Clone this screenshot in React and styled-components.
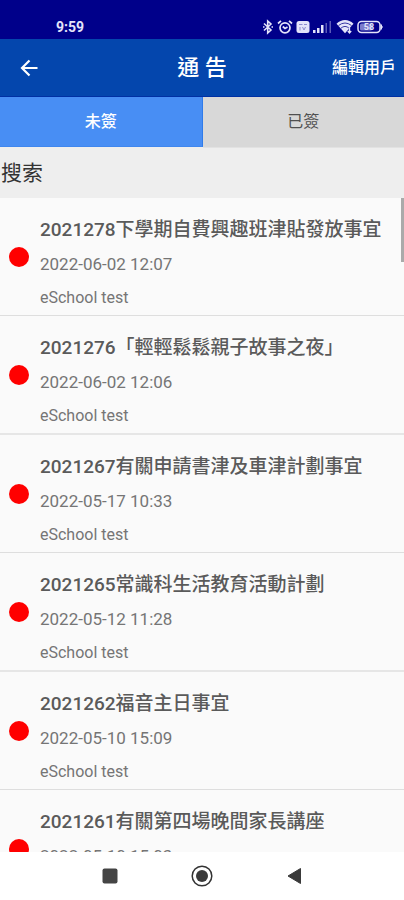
import React, { useState } from "react";
import styled, { createGlobalStyle } from "styled-components";

const GlobalStyle = createGlobalStyle`
  * {
    box-sizing: border-box;
  }

  body {
    margin: 0;
    font-family: Roboto, "Noto Sans CJK TC", sans-serif;
    background-color: #fafafa;
  }

  button,
  input {
    font-family: inherit;
  }
`;

const Screen = styled.div`
  display: flex;
  flex-direction: column;
  height: 100vh;
  overflow: hidden;
`;

// status bar
const StatusBar = styled.div`
  display: flex;
  justify-content: space-between;
  align-items: center;
  flex: none;
  height: 39px;
  padding: 14px 20px 0 56px;
  background-color: #00008a;
  color: #e4e4fa;
`;

const Clock = styled.span`
  font-size: 14px;
  line-height: 24px;
  font-weight: 700;
`;

const StatusIcons = styled.div`
  display: flex;
  align-items: center;
  gap: 3px;

  svg {
    display: block;
  }
`;

// header
const Header = styled.header`
  display: grid;
  grid-template-columns: 1fr auto 1fr;
  align-items: center;
  flex: none;
  height: 58px;
  padding: 0 8px;
  background-color: #0446ad;
  border-bottom: 1px solid #0030a4;
  color: white;
`;

const BackButton = styled.button`
  display: flex;
  justify-self: start;
  padding: 8px;
  border: none;
  background: none;
  color: white;
  cursor: pointer;
`;

const Title = styled.h1`
  margin: 0;
  font-size: 22px;
  line-height: 32px;
  font-weight: 500;
`;

const EditButton = styled.button`
  justify-self: end;
  padding: 0;
  border: none;
  background: none;
  color: white;
  font-size: 16px;
  line-height: 24px;
  font-weight: 500;
  cursor: pointer;
`;

// tabs
const Tabs = styled.div`
  display: flex;
  flex: none;
  height: 51px;
  background-color: #eeeeee;
`;

const Tab = styled.button`
  flex: 1;
  height: ${(props) => (props.$active ? "50px" : "51px")};
  padding: 0;
  border: none;
  border-right: ${(props) => (props.$active ? "1px solid #2f7bea" : "none")};
  border-bottom: 1px solid ${(props) => (props.$active ? "#3f86ee" : "#e2e2e2")};
  background-color: ${(props) => (props.$active ? "#488ef4" : "#d8d8d8")};
  color: ${(props) => (props.$active ? "white" : "#505050")};
  font-size: 16px;
  line-height: 24px;
  font-weight: ${(props) => (props.$active ? 500 : 400)};
  cursor: pointer;
`;

const SearchInput = styled.input`
  flex: none;
  width: 100%;
  height: 50px;
  padding: 0 0 0 1px;
  border: none;
  border-radius: 0;
  outline: none;
  background-color: #eeeeee;
  color: #333333;
  font-size: 21px;

  &::placeholder {
    color: #333333;
    opacity: 1;
  }
`;

// notice list
const ListArea = styled.main`
  position: relative;
  flex: 1;
  min-height: 0;
  overflow: hidden;
`;

const NoticeList = styled.ul`
  height: 100%;
  margin: 0;
  padding: 0;
  list-style: none;
  overflow-y: auto;
  scrollbar-width: none;
`;

const NoticeItem = styled.li`
  border-bottom: 1px solid #dedede;

  &:nth-child(even) {
    border-bottom: 2px solid #e6e6e6;
  }
`;

const NoticeLink = styled.a`
  display: flex;
  align-items: center;
  gap: 11px;
  padding: 16px 9px 1px;
  color: #757575;
  text-decoration: none;
`;

const UnreadDot = styled.span`
  flex: none;
  width: 20px;
  height: 20px;
  margin-bottom: 14px;
  border-radius: 50%;
  background-color: #ff0000;
`;

const NoticeText = styled.div`
  min-width: 0;
  white-space: nowrap;
`;

const NoticeTitle = styled.h2`
  margin: 0 0 2px;
  color: #5a5a5a;
  font-size: 19px;
  line-height: 32px;
  font-weight: 500;
`;

const NoticeDate = styled.time`
  display: block;
  font-size: 17px;
  line-height: 33px;
`;

const NoticeSchool = styled.p`
  margin: 0;
  font-size: 16px;
  line-height: 33px;
`;

const ScrollThumb = styled.div`
  position: absolute;
  top: 0;
  right: 0;
  width: 3px;
  height: 64px;
  background-color: #aaaaaa;
`;

// android navigation
const NavBar = styled.nav`
  display: grid;
  grid-template-columns: 1fr 24px 1fr;
  align-items: center;
  gap: 68px;
  flex: none;
  height: 48px;
  background-color: white;
`;

const NavButton = styled.button`
  display: flex;
  justify-content: center;
  justify-self: ${(props) => props.$align || "center"};
  width: 24px;
  padding: 0;
  border: none;
  background: none;
  cursor: pointer;
`;

const notices = [
  { no: "2021278", title: "下學期自費興趣班津貼發放事宜", date: "2022-06-02 12:07" },
  { no: "2021276", title: "「輕輕鬆鬆親子故事之夜」", date: "2022-06-02 12:06" },
  { no: "2021267", title: "有關申請書津及車津計劃事宜", date: "2022-05-17 10:33" },
  { no: "2021265", title: "常識科生活教育活動計劃", date: "2022-05-12 11:28" },
  { no: "2021262", title: "福音主日事宜", date: "2022-05-10 15:09" },
  { no: "2021261", title: "有關第四場晚間家長講座", date: "2022-05-10 15:03" },
];

function BluetoothIcon() {
  return (
    <svg width="12" height="16" viewBox="0 0 12 16" fill="none" stroke="currentColor" strokeWidth="1.6">
      <path d="M2 4.5l7 6.5-3.3 3V2L9 5l-7 6.5" />
      <path d="M1 8h1.5M9.5 8H11" />
    </svg>
  );
}

function AlarmIcon() {
  return (
    <svg width="16" height="16" viewBox="0 0 16 16" fill="none" stroke="currentColor" strokeWidth="1.7">
      <circle cx="8" cy="8.8" r="5" />
      <path d="M1 4.5L4 1.8M15 4.5L12 1.8M5.8 7.5L8 9.5l2.5-1.5" />
    </svg>
  );
}

function SimIcon() {
  return (
    <svg width="14" height="14" viewBox="0 0 14 14">
      <rect x="0.5" y="1" width="13" height="12" rx="2.5" fill="currentColor" />
      <path d="M3 4.5h3.5M8 4.5h3M4 7v3.5M6.5 7l1.5 3L9.500 7" fill="none" stroke="#8c8cd0" />
    </svg>
  );
}

function SignalIcon() {
  return (
    <svg width="20" height="14" viewBox="0 0 20 14" fill="currentColor">
      <rect x="0" y="10" width="2.5" height="3" />
      <rect x="4" y="8" width="2.5" height="5" />
      <rect x="8" y="5" width="2.5" height="8" />
      <rect x="12.5" y="3" width="1.5" height="10" opacity="0.4" />
      <rect x="16.5" y="1" width="1.5" height="12" opacity="0.4" />
    </svg>
  );
}

function WifiIcon() {
  return (
    <svg width="18" height="15" viewBox="0 0 18 15">
      <path d="M9 14.2L0.5 4.7Q4.5 1 9 1t8.5 3.7z" fill="currentColor" />
      <path d="M2.5 6.500Q9 1.500 15.500 6.500M4.800 9.300Q9 5.500 13.200 9.300" fill="none" stroke="#3838a4" />
      <path d="M13.500 8.500v5M11.800 12l1.700 2 1.700-2" fill="none" stroke="currentColor" strokeWidth="1.3" />
    </svg>
  );
}

const BatteryText = styled.text`
  font-size: 9px;
  font-weight: 700;
`;

function BatteryIcon() {
  return (
    <svg width="27" height="14" viewBox="0 0 27 14">
      <rect x="1" y="1.5" width="22" height="11" rx="3.5" fill="none" stroke="currentColor" strokeWidth="1.5" />
      <rect x="3" y="3.5" width="12" height="7" rx="1.5" fill="#7c7ccc" />
      <path d="M24 4.5q2.5 2.5 0 5z" fill="currentColor" stroke="currentColor" />
      <BatteryText x="12" y="10" textAnchor="middle" fill="currentColor">58</BatteryText>
    </svg>
  );
}

function BackIcon() {
  return (
    <svg width="24" height="24" viewBox="0 0 24 24" fill="none" stroke="currentColor" strokeWidth="2.2">
      <path d="M21.5 12H7M13.5 4.5L6 12l7.5 7.5" />
    </svg>
  );
}

export default function App() {
  const [tab, setTab] = useState("unsigned");
  const [keyword, setKeyword] = useState("");

  const visible = tab === "unsigned" ? notices.filter((n) => (n.no + n.title).includes(keyword)) : [];

  return (
    <>
      <GlobalStyle />
      <Screen>
        <StatusBar>
          <Clock>9:59</Clock>
          <StatusIcons>
            <BluetoothIcon />
            <AlarmIcon />
            <SimIcon />
            <SignalIcon />
            <WifiIcon />
            <BatteryIcon />
          </StatusIcons>
        </StatusBar>

        <Header>
          <BackButton type="button" aria-label="返回">
            <BackIcon />
          </BackButton>
          <Title>通 告</Title>
          <EditButton type="button">編輯用戶</EditButton>
        </Header>

        <Tabs>
          <Tab type="button" $active={tab === "unsigned"} onClick={() => setTab("unsigned")}>
            未簽
          </Tab>
          <Tab type="button" $active={tab === "signed"} onClick={() => setTab("signed")}>
            已簽
          </Tab>
        </Tabs>

        <SearchInput
          type="text"
          aria-label="搜索"
          placeholder="搜索"
          value={keyword}
          onChange={(e) => setKeyword(e.target.value)}
        />

        <ListArea>
          <NoticeList>
            {visible.map((n) => (
              <NoticeItem key={n.no}>
                <NoticeLink href={"#" + n.no}>
                  <UnreadDot />
                  <NoticeText>
                    <NoticeTitle>{n.no}{n.title}</NoticeTitle>
                    <NoticeDate>{n.date}</NoticeDate>
                    <NoticeSchool>eSchool test</NoticeSchool>
                  </NoticeText>
                </NoticeLink>
              </NoticeItem>
            ))}
          </NoticeList>
          <ScrollThumb />
        </ListArea>

        <NavBar>
          <NavButton type="button" aria-label="最近" $align="end">
            <svg width="24" height="24" viewBox="0 0 24 24">
              <rect x="4.5" y="4.5" width="15" height="15" rx="2" fill="#444444" />
            </svg>
          </NavButton>
          <NavButton type="button" aria-label="主頁">
            <svg width="24" height="24" viewBox="0 0 24 24">
              <circle cx="12" cy="12" r="9.8" fill="none" stroke="#333333" strokeWidth="1.5" />
              <circle cx="12" cy="12" r="6" fill="#3a3a3a" />
            </svg>
          </NavButton>
          <NavButton type="button" aria-label="返回" $align="start">
            <svg width="24" height="24" viewBox="0 0 24 24">
              <path d="M18.5 4.5v15L6 12z" fill="#3a3a3a" stroke="#3a3a3a" strokeLinejoin="round" />
            </svg>
          </NavButton>
        </NavBar>
      </Screen>
    </>
  );
}
